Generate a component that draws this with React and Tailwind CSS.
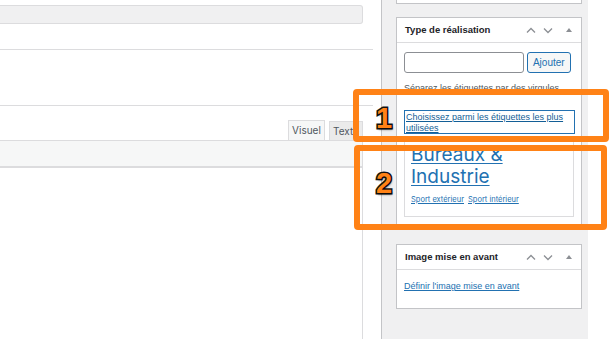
import React from "react";

const ChevUp = () => (
  <svg width="10" height="7" viewBox="0 0 10 7" fill="none" stroke="#8c8f94" strokeWidth="1.3">
    <path d="M1 5.5 L5 1.5 L9 5.5" />
  </svg>
);
const ChevDown = () => (
  <svg width="10" height="7" viewBox="0 0 10 7" fill="none" stroke="#8c8f94" strokeWidth="1.3">
    <path d="M1 1.5 L5 5.5 L9 1.5" />
  </svg>
);
const Tri = () => (
  <svg width="6" height="4" viewBox="0 0 6 4">
    <path d="M0 4 L3 0 L6 4 Z" fill="#8c8f94" />
  </svg>
);

const BoxHeader = ({ title }) => (
  <div className="h-[25px] flex items-center border-b border-[#dcdcde] pl-[8px] pr-[9px]">
    <span className="text-[9.5px] font-bold text-[#1d2327] flex-1 font-['Liberation_Sans',Arial,sans-serif]">{title}</span>
    <div className="flex items-center">
      <ChevUp />
      <span className="ml-[7px] flex"><ChevDown /></span>
      <span className="ml-[13px] flex items-center"><Tri /></span>
    </div>
  </div>
);

const numCls =
  "absolute text-[29px] leading-none font-black text-[#ff8216] [font-family:'Liberation_Sans',Arial,sans-serif] [-webkit-text-stroke:3px_#111] [paint-order:stroke_fill] [text-shadow:1px_2px_2px_rgba(0,0,0,0.45)]";

export default function App() {
  return (
    <div className="relative w-[610px] h-[339px] overflow-hidden bg-white flex font-['Inter',sans-serif]">
      {/* Left column */}
      <div className="w-[382px] shrink-0 h-full border-r border-[#c3c4c7] flex flex-col">
        <div className="mt-[5px] h-[19px] w-[363px] bg-[#f0f0f1] border border-[#dcdcde] border-l-0 rounded-r-[3px]" />
        <div className="mt-[25px] h-px w-[373px] bg-[#dcdcde]" />
        <div className="mt-[55px] h-px w-[373px] bg-[#dcdcde]" />
        <div className="mt-[14px] w-[363px] flex justify-end gap-[4px] pr-0">
          <div className="h-[20px] w-[37px] border border-[#dcdcde] border-b-0 bg-[#f6f7f7] text-[10px] text-[#50575e] flex items-center justify-center">
            Visuel
          </div>
          <div className="h-[19px] mt-[1px] w-[34px] border border-[#dcdcde] border-b-0 bg-[#ebebeb] text-[10px] text-[#50575e] flex items-center justify-center">
            Texte
          </div>
        </div>
        <div className="h-[28px] w-[363px] bg-[#f6f7f7] border border-[#dcdcde] border-l-0 border-b-[2px] border-b-[#dcdcde]" />
        <div className="flex-1 w-[363px] border-r border-[#dcdcde]" />
      </div>

      {/* Sidebar */}
      <div className="w-[206px] shrink-0 h-full bg-[#f0f0f1] pl-[14px] pr-[6px] flex flex-col">
        <div className="h-[4px] w-[186px] bg-white border border-t-0 border-[#c3c4c7]" />
        <div className="mt-[13px] w-[186px] bg-white border border-[#c3c4c7] h-[211px]">
          <BoxHeader title="Type de réalisation" />
          <div className="pl-[7px] pr-[10px] pt-[9px] font-['Liberation_Sans',Arial,sans-serif]">
            <div className="flex gap-[3px]">
              <div className="w-[121px] h-[21px] border border-[#8c8f94] rounded-[3px] bg-white" />
              <div className="w-[45px] h-[21px] border border-[#2271b1] rounded-[3px] bg-[#f6f7f7] text-[10px] text-[#2271b1] flex items-center justify-center">
                Ajouter
              </div>
            </div>
            <div className="mt-[9px] text-[9px] text-[#50575e] leading-[12px] whitespace-nowrap">
              Séparez les étiquettes par des virgules
            </div>
            <div className="mt-[16px] w-[171px] h-[24px] border border-[#2271b1] px-[1px] pt-[1px] text-[9px] leading-[11px] text-[#135e96] underline">
              Choisissez parmi les étiquettes les plus utilisées
            </div>
            <div className="mt-[4px] w-[170px] h-[79px] border border-[#dcdcde] pl-[6px] pt-[5px] overflow-hidden font-['Inter',sans-serif]">
              <div className="text-[19px] leading-[22px] text-[#2271b1] underline decoration-1 underline-offset-2">
                Bureaux &amp;
              </div>
              <div className="text-[19px] leading-[22px] text-[#2271b1] underline decoration-1 underline-offset-2">
                Industrie
              </div>
              <div className="mt-[6px] flex gap-[4px] text-[7.5px] text-[#2271b1] underline">
                <span>Sport extérieur</span>
                <span>Sport intérieur</span>
              </div>
            </div>
          </div>
        </div>
        <div className="mt-[16px] w-[186px] bg-white border border-[#c3c4c7] h-[65px]">
          <BoxHeader title="Image mise en avant" />
          <div className="pl-[7px] pt-[10px] text-[9px] text-[#2271b1] underline font-['Liberation_Sans',Arial,sans-serif]">
            Définir l'image mise en avant
          </div>
        </div>
      </div>
      <div className="flex-1 h-full bg-white" />

      {/* Annotations */}
      <div className="absolute left-[353px] top-[89px] w-[256px] h-[53px] border-[6px] border-[#ff8216] rounded-[4px]" />
      <div className="absolute left-[354px] top-[145px] w-[253px] h-[85px] border-[6px] border-[#ff8216] rounded-[4px]" />
      <div className={numCls + " left-[376px] top-[104px]"}>1</div>
      <div className={numCls + " left-[376px] top-[169px]"}>2</div>
    </div>
  );
}
